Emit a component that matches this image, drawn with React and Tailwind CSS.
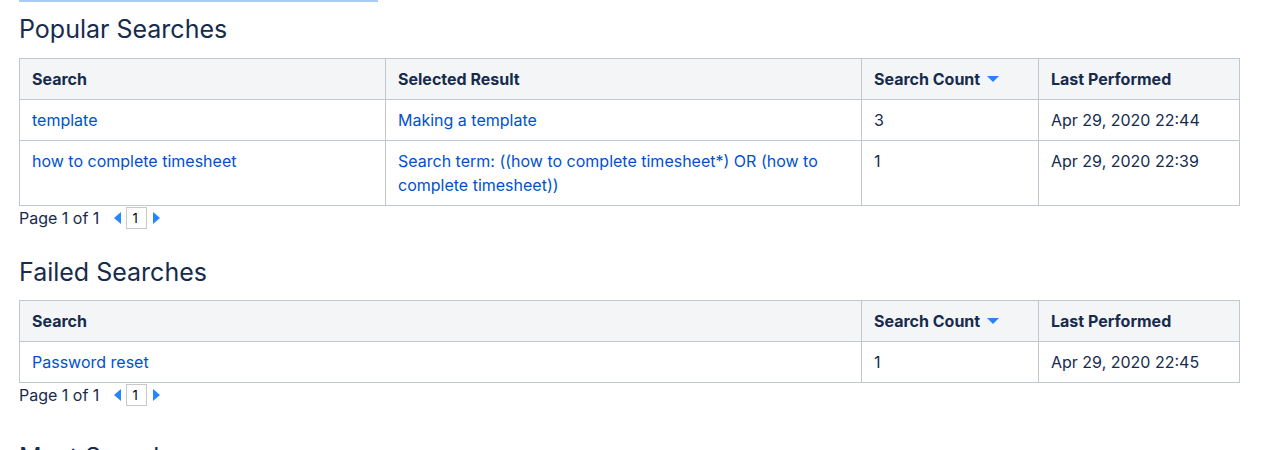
import React from "react";

const font = { fontFamily: "Inter, 'Noto Sans', 'Liberation Sans', sans-serif" };

function SortArrow() {
  return (
    <svg width="12" height="7" viewBox="0 0 12 7" className="inline-block ml-[7px] mb-[3px]">
      <path d="M0 0 L12 0 L6 6 Z" fill="#2684ff" />
    </svg>
  );
}

function Pager() {
  return (
    <div className="flex items-center h-[24px] text-[16px] text-[#172b4d]">
      <span>Page 1 of 1</span>
      <svg width="7" height="12" viewBox="0 0 7 12" className="ml-[15px]">
        <path d="M7 0 L7 12 L0 6 Z" fill="#2684ff" />
      </svg>
      <div className="ml-[5px] w-[21px] h-[22px] border border-[#c8c8c8] bg-white text-[13px] text-black flex items-center pl-[5px]">1</div>
      <svg width="7" height="12" viewBox="0 0 7 12" className="ml-[6px]">
        <path d="M0 0 L0 12 L7 6 Z" fill="#2684ff" />
      </svg>
    </div>
  );
}

const th = "border border-[#c1c7d0] bg-[#f4f5f7] text-left font-bold text-[#172b4d] px-[12px] py-[8px] align-top";
const td = "border border-[#c1c7d0] text-left px-[12px] py-[8px] align-top";
const link = "text-[#0052cc]";

export default function App() {
  return (
    <div className="bg-white w-[1263px] h-[450px] overflow-hidden text-[16px] leading-[24px]" style={font}>
      <div className="ml-[19px] w-[359px] h-[2px] bg-[#a8cbf7]" />
      <div className="px-[19px] w-[1239px]">
        <h2 className="text-[25px] leading-[30px] text-[#172b4d] font-normal mt-[12px] mb-[14px]">Popular Searches</h2>
        <table className="w-[1220px] table-fixed border-collapse">
          <colgroup>
            <col className="w-[366px]" />
            <col className="w-[476px]" />
            <col className="w-[177px]" />
            <col className="w-[201px]" />
          </colgroup>
          <thead>
            <tr>
              <th className={th}>Search</th>
              <th className={th}>Selected Result</th>
              <th className={th}>Search Count<SortArrow /></th>
              <th className={th}>Last Performed</th>
            </tr>
          </thead>
          <tbody>
            <tr>
              <td className={td}><span className={link}>template</span></td>
              <td className={td}><span className={link}>Making a template</span></td>
              <td className={td + " text-[#172b4d]"}>3</td>
              <td className={td + " text-[#172b4d]"}>Apr 29, 2020 22:44</td>
            </tr>
            <tr>
              <td className={td}><span className={link}>how to complete timesheet</span></td>
              <td className={td}><span className={link}>Search term: ((how to complete timesheet*) OR (how to complete timesheet))</span></td>
              <td className={td + " text-[#172b4d]"}>1</td>
              <td className={td + " text-[#172b4d]"}>Apr 29, 2020 22:39</td>
            </tr>
          </tbody>
        </table>
        <div><Pager /></div>

        <h2 className="text-[25px] leading-[30px] text-[#172b4d] font-normal mt-[27px] mb-[13px]">Failed Searches</h2>
        <table className="w-[1220px] table-fixed border-collapse">
          <colgroup>
            <col className="w-[842px]" />
            <col className="w-[177px]" />
            <col className="w-[201px]" />
          </colgroup>
          <thead>
            <tr>
              <th className={th}>Search</th>
              <th className={th}>Search Count<SortArrow /></th>
              <th className={th}>Last Performed</th>
            </tr>
          </thead>
          <tbody>
            <tr>
              <td className={td}><span className={link}>Password reset</span></td>
              <td className={td + " text-[#172b4d]"}>1</td>
              <td className={td + " text-[#172b4d]"}>Apr 29, 2020 22:45</td>
            </tr>
          </tbody>
        </table>
        <div><Pager /></div>

        <h2 className="text-[25px] leading-[30px] text-[#172b4d] font-normal mt-[35px] mb-[12px]">Most Searches</h2>
      </div>
    </div>
  );
}
